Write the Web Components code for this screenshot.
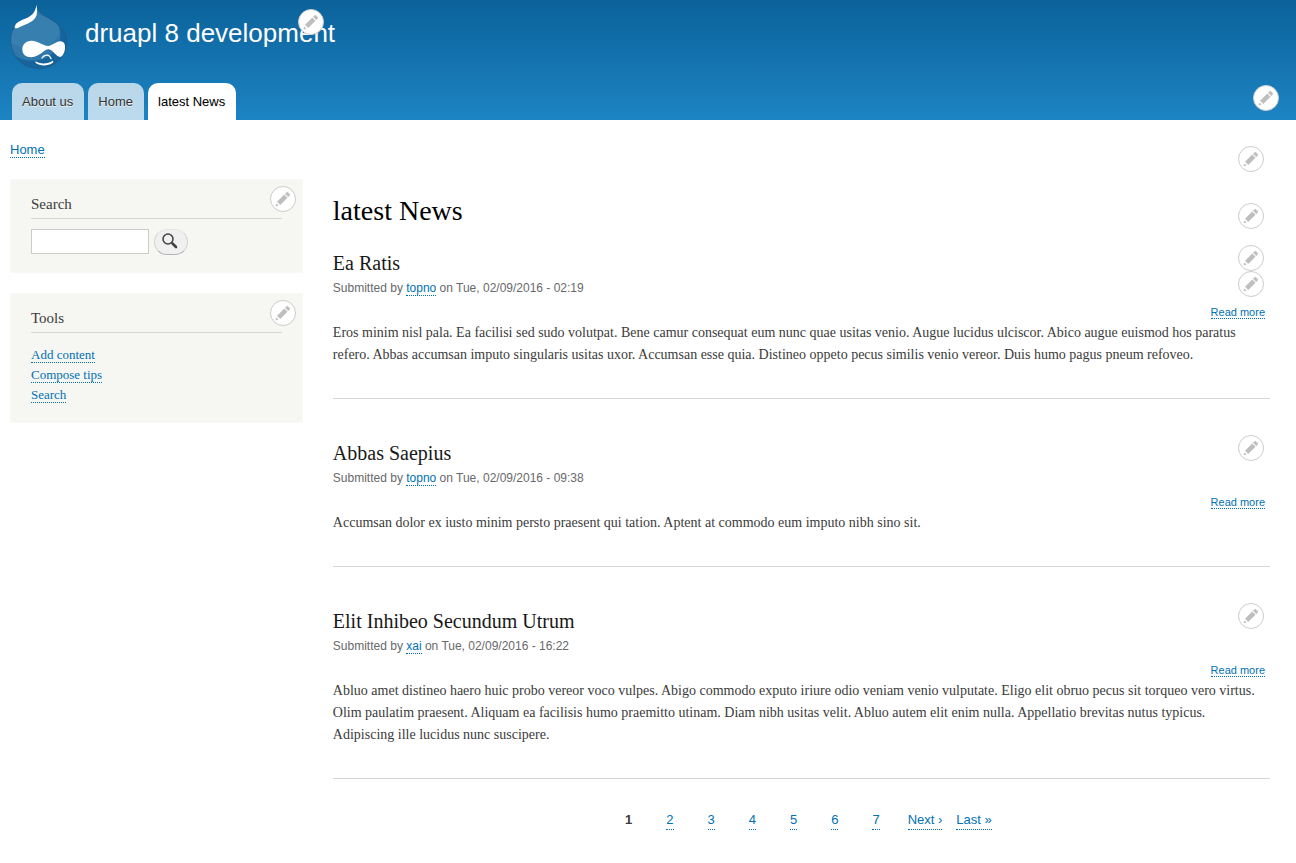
<!DOCTYPE html>
<html lang="en">
<head>
<meta charset="utf-8">
<meta name="viewport" content="width=device-width, initial-scale=1">
<title>latest News | druapl 8 development</title>
<style>
  body { margin: 0; background: #fff; color: #3b3b3b; font-family: "Liberation Serif", "Times New Roman", serif; }
</style>
</head>
<body>
<site-page></site-page>

<script>
const sheet = `
  *, *::before { box-sizing: border-box; }
  h1, h2, p, ul { margin: 0; padding: 0; font-weight: normal; }
  ul { list-style: none; }
  a { color: #0071b3; text-decoration: none; border-bottom: 1px dotted #0071b3; }
`;

function define(name, html, setup) {
  const template = document.createElement('template');
  template.innerHTML = html;
  customElements.define(name, class extends HTMLElement {
    constructor() {
      super();
      const root = this.attachShadow({ mode: 'open' });
      root.append(template.content.cloneNode(true));
    }
    connectedCallback() {
      if (setup) setup(this, this.shadowRoot);
    }
  });
}

define('edit-button', `
  <style>${sheet}
    :host { display: block; width: 26px; height: 26px; }
    button { display: block; width: 26px; height: 26px; padding: 4px; border: 1px solid #ccc; border-radius: 50%; background: #fff; cursor: pointer; }
    svg { display: block; width: 16px; height: 16px; }
  </style>
  <button type="button" aria-label="Open configuration options">
    <svg viewBox="0 0 16 16" fill="#bebebe" stroke="#bebebe" stroke-width=".4" aria-hidden="true">
      <path d="M14.545 3.042l-1.586-1.585c-.389-.389-1.025-.389-1.414 0l-1.293 1.293 3 3 1.293-1.293c.389-.389.389-1.026 0-1.415z"/>
      <rect x="5.129" y="3.8" transform="matrix(-.707 -.707 .707 -.707 6.189 20.064)" width="4.243" height="9.899"/>
      <path d="M.908 14.775c-.087.262.055.397.316.312l2.001-.667-1.65-1.646-.667 2.001z"/>
    </svg>
  </button>
`);

define('site-logo', `
  <style>:host { display: block; width: 59px; height: 66px; } svg { display: block; }</style>
  <svg width="59" height="66" viewBox="27 12 177 198" role="img" aria-label="Home">
    <defs><clipPath id="drop"><path d="M109 14C112 29 116 37 131 46C145 54 159 61 171 71C190 87 200 102 200 123C200 173 160 206 117 206C70 206 32 171 32 121C32 91 48 72 71 62C93 51 108 39 109 14Z"/></clipPath></defs>
    <g clip-path="url(#drop)">
      <path fill="#2f78a9" d="M20 0h190v215H20z"/>
      <path fill="#4388b4" d="M20 60L109 40C150 58 172 66 180 84C184 112 150 150 95 148C60 146 40 130 20 124Z" opacity=".45"/>
      <path fill="#17639b" d="M172 70C190 106 182 146 142 172C104 190 62 184 38 160C60 215 150 230 194 172C216 137 208 92 172 70Z"/>
    </g>
    <path fill="none" stroke="#1c5787" stroke-width="2" d="M109 14C112 29 116 37 131 46C145 54 159 61 171 71C190 87 200 102 200 123C200 173 160 206 117 206C70 206 32 171 32 121C32 91 48 72 71 62C93 51 108 39 109 14Z"/>
    <g fill="#fff">
      <path d="M109 14C113 30 112 44 106 53C97 67 80 71 66 78C57 83 48 88 44 83C44 71 56 65 71 58C94 49 107 38 109 14Z"/>
      <path d="M94 122C112 122 129 137 144 138C158 137 169 123 182 124C193 125 196 134 195 146C193 160 187 170 180 171C169 171 158 149 146 148C132 147 120 171 94 172C77 172 67 163 67 148C67 133 78 122 94 122Z"/>
      <path d="M106 184C118 192 144 193 158 182C161 184 160 188 156 190C143 199 118 198 107 189Z"/>
    </g>
    <path fill="none" stroke="#fff" stroke-width="4" stroke-linecap="round" d="M126 174C131 166 141 163 147 167C151 170 152 173 153 176"/>
  </svg>
`);

define('main-menu', `
  <style>${sheet}
    :host { display: block; }
    ul { display: flex; gap: 4px; }
    a { display: block; padding: 0 11px 0 10px; line-height: 37px; font-size: 13px; color: #333; background: rgba(255,255,255,.7); border: 0; border-radius: 10px 10px 0 0; text-shadow: 0 1px #eee; }
    a.active { background: #fff; color: #000; }
  </style>
  <nav aria-label="Main navigation"><ul></ul></nav>
`, (host, root) => {
  root.querySelector('ul').innerHTML = host.getAttribute('items').split('|').map(t =>
    `<li><a href="#"${t === host.getAttribute('current') ? ' class="active" aria-current="page"' : ''}>${t}</a></li>`).join('');
});

define('site-header', `
  <style>${sheet}
    :host { display: flex; flex-direction: column; justify-content: space-between; position: relative; height: 120px; background: linear-gradient(#0b629a, #1d84c3); font-family: "Liberation Sans", Arial, sans-serif; }
    .brand { display: flex; align-items: flex-start; gap: 17px; padding: 4px 0 0 9px; }
    .name { position: relative; padding-top: 14px; font-size: 26px; line-height: 30px; }
    .name a { color: #fffeff; border: 0; }
    .name edit-button { position: absolute; right: 11px; top: 5px; }
    main-menu { padding-left: 12px; }
    .menu-edit { position: absolute; right: 17px; bottom: 9px; }
  </style>
  <div class="brand">
    <site-logo></site-logo>
    <div class="name"><a href="#">druapl 8 development</a><edit-button></edit-button></div>
  </div>
  <main-menu items="About us|Home|latest News" current="latest News"></main-menu>
  <edit-button class="menu-edit"></edit-button>
`);

define('side-block', `
  <style>${sheet}
    :host { display: block; position: relative; box-sizing: border-box; padding: 14px 20px 17px; background: #f6f6f2; border: 1px solid #f9f9f9; }
    h2 { font-size: 15px; line-height: 20px; padding-bottom: 4px; border-bottom: 1px solid #d6d6d6; margin-bottom: 10px; }
    edit-button { position: absolute; right: 6px; top: 6px; }
  </style>
  <h2></h2><slot></slot><edit-button></edit-button>
`, (host, root) => { root.querySelector('h2').textContent = host.getAttribute('heading'); });

define('search-form', `
  <style>${sheet}
    :host { display: block; }
    form { display: flex; align-items: flex-start; gap: 5px; margin: 0; }
    input { width: 118px; height: 25px; padding: 2px 4px; border: 1px solid #ccc; background: #fff; font: 13px "Liberation Sans", Arial, sans-serif; }
    button { display: grid; place-items: center; width: 34px; height: 26px; padding: 0 2px 2px 0; border: 1px solid #e4e4e4; border-bottom-color: #b4b4b4; border-left-color: #d2d2d2; border-right-color: #d2d2d2; border-radius: 13px; background: #f0f0f0; cursor: pointer; }
    svg { display: block; }
  </style>
  <form role="search">
    <input type="search" aria-label="Search">
    <button type="submit" aria-label="Search">
      <svg width="16" height="16" viewBox="0 0 16 16" fill="none" stroke="#424242" aria-hidden="true">
        <circle cx="6" cy="6" r="5" stroke-width="1.5"/>
        <path d="M9.5 9.5L11 11" stroke-width="2"/><path d="M11 11L14 14" stroke-width="2.6" stroke-linecap="round"/>
      </svg>
    </button>
  </form>
`);

define('link-list', `
  <style>${sheet}
    :host { display: block; padding-top: 2px; font-size: 13px; line-height: 20px; }
    a { line-height: 1; }
  </style>
  <ul></ul>
`, (host, root) => {
  root.querySelector('ul').innerHTML = host.getAttribute('items').split('|').map(t => `<li><a href="#">${t}</a></li>`).join('');
});

define('news-teaser', `
  <style>${sheet}
    :host { display: block; position: relative; padding-bottom: 32px; border-bottom: 1px solid #d3d7d9; }
    h2 { font-size: 20px; line-height: 24px; margin-bottom: 3px; }
    h2 a { color: #181818; border: 0; }
    .meta { font: 12px/20px "Liberation Sans", Arial, sans-serif; color: #68696b; }
    .more { display: flex; justify-content: flex-end; padding: 9px 5px 3px 0; font: 11px/11px "Liberation Sans", Arial, sans-serif; }
    .body { padding-right: 5px; font-size: 14px; line-height: 22px; }
    .tools { position: absolute; right: 6px; top: -6px; }
  </style>
  <article>
    <h2><a href="#"></a></h2>
    <div class="meta">Submitted by <a href="#" class="author"></a> on <span></span></div>
    <div class="more"><a href="#">Read more</a></div>
    <p class="body"><slot></slot></p>
  </article>
  <div class="tools"><slot name="tools"><edit-button></edit-button></slot></div>
`, (host, root) => {
  root.querySelector('h2 a').textContent = host.getAttribute('heading');
  root.querySelector('.author').textContent = host.getAttribute('author');
  root.querySelector('.meta span').textContent = host.getAttribute('date');
});

define('page-nav', `
  <style>${sheet}
    :host { display: block; font: 13px/18px "Liberation Sans", Arial, sans-serif; }
    ul { display: flex; justify-content: center; flex-wrap: wrap; }
    li { padding: 0 17px; }
    li.word { padding: 0 3px 0 11px; }
    a, strong { display: block; }
  </style>
  <nav aria-label="Pagination"><ul>
    <li><strong aria-current="page">1</strong></li>
    <li><a href="#">2</a></li><li><a href="#">3</a></li><li><a href="#">4</a></li>
    <li><a href="#">5</a></li><li><a href="#">6</a></li><li><a href="#">7</a></li>
    <li class="word"><a href="#">Next ›</a></li>
    <li class="word"><a href="#">Last »</a></li>
  </ul></nav>
`);

define('site-page', `
  <style>${sheet}
    :host { display: block; }
    .crumbs { position: relative; margin: 0 26px 0 10px; padding: 20px 0 19px; font: 13px/20px "Liberation Sans", Arial, sans-serif; }
    .crumbs edit-button { position: absolute; right: 6px; top: 26px; }
    .columns { display: grid; grid-template-columns: 1fr 3.2fr; gap: 30px; padding: 0 26px 24px 10px; }
    aside { display: flex; flex-direction: column; gap: 20px; }
    .title { position: relative; padding: 15px 0 24px; }
    .title edit-button { position: absolute; right: 6px; top: 24px; }
    h1 { font-size: 28px; line-height: 33px; color: #000; }
    .list { display: flex; flex-direction: column; gap: 42px; }
    page-nav { margin-top: 32px; }
  </style>
  <site-header></site-header>
  <nav class="crumbs" aria-label="Breadcrumb"><a href="#">Home</a><edit-button></edit-button></nav>
  <div class="columns">
    <aside>
      <side-block heading="Search"><search-form></search-form></side-block>
      <side-block heading="Tools"><link-list items="Add content|Compose tips|Search"></link-list></side-block>
    </aside>
    <main>
      <div class="title"><h1>latest News</h1><edit-button></edit-button></div>
      <div class="list">
        <news-teaser heading="Ea Ratis" author="topno" date="Tue, 02/09/2016 - 02:19"><div slot="tools"><edit-button></edit-button><edit-button></edit-button></div>Eros minim nisl pala. Ea facilisi sed sudo volutpat. Bene camur consequat eum nunc quae usitas venio. Augue lucidus ulciscor. Abico augue euismod hos paratus refero. Abbas accumsan imputo singularis usitas uxor. Accumsan esse quia. Distineo oppeto pecus similis venio vereor. Duis humo pagus pneum refoveo.</news-teaser>
        <news-teaser heading="Abbas Saepius" author="topno" date="Tue, 02/09/2016 - 09:38">Accumsan dolor ex iusto minim persto praesent qui tation. Aptent at commodo eum imputo nibh sino sit.</news-teaser>
        <news-teaser heading="Elit Inhibeo Secundum Utrum" author="xai" date="Tue, 02/09/2016 - 16:22">Abluo amet distineo haero huic probo vereor voco vulpes. Abigo commodo exputo iriure odio veniam venio vulputate. Eligo elit obruo pecus sit torqueo vero virtus. Olim paulatim praesent. Aliquam ea facilisis humo praemitto utinam. Diam nibh usitas velit. Abluo autem elit enim nulla. Appellatio brevitas nutus typicus. Adipiscing ille lucidus nunc suscipere.</news-teaser>
      </div>
      <page-nav></page-nav>
    </main>
  </div>
`);
</script>
</body>
</html>
